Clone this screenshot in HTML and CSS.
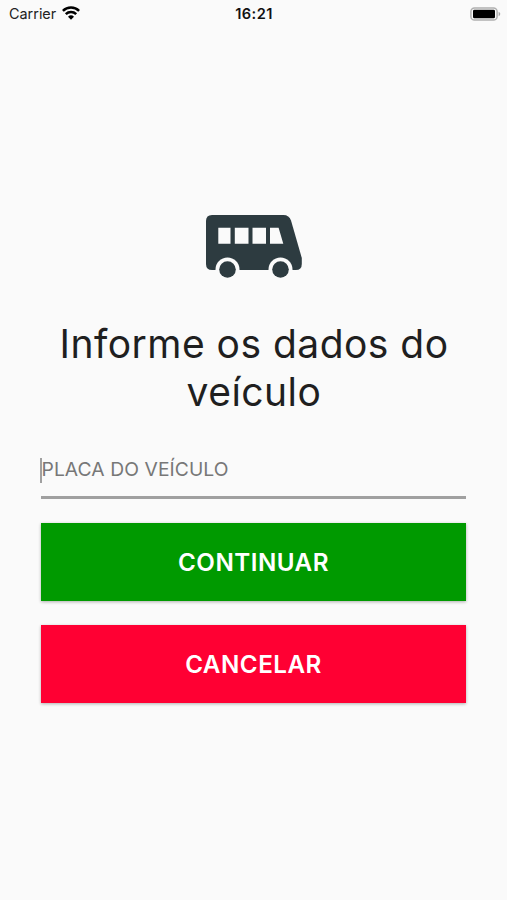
FILE: index.html
```html
<!DOCTYPE html>
<html lang="pt-BR">
<head>
    <meta charset="UTF-8">
    <meta name="viewport" content="width=device-width, initial-scale=1.0">
    <title>Dados do veículo</title>
    <link rel="stylesheet" href="styles.css">
</head>
<body>
    <header class="status-bar">
        <div class="carrier">
            <span>Carrier</span>
            <svg class="wifi" viewBox="0 0 18 14" width="18" height="14">
                <path d="M.9 4.900a11.600 11.600 0 0 1 16.200 0M3.800 8.100a7.400 7.400 0 0 1 10.400 0" fill="none" stroke="#000" stroke-width="2.500"/>
                <path d="M6 10.700a4.300 4.300 0 0 1 6 0L9 13.800z" fill="#000"/>
            </svg>
        </div>
        <div class="clock">16:21</div>
        <div class="power">
            <svg class="battery" viewBox="0 0 31 14" width="31" height="14">
                <rect x="0.9" y="0.9" width="26.2" height="12.2" rx="3.6" fill="#fafafa" stroke="#b0b0b0" stroke-width="1.5"/>
                <rect x="3" y="2.7" width="22" height="8.6" rx="1.4" fill="#000"/>
                <path d="M28.6 4.8c2.2.8 2.2 3.6 0 4.4z" fill="#a8a8a8"/>
            </svg>
        </div>
    </header>

    <main class="content">
        <svg class="bus" viewBox="0 0 98 64" width="98" height="64">
            <path d="M7 0H78.500q5.500 0 7.500 5.500L96.800 43V49q0 6-6 6H7q-6 0-6-6V6q0-6 6-6z" fill="#2d3b40"/>
            <path d="M13.300 12.700h12.200v16H13.300zM29.800 12.700h13.700v16H29.800zM47.500 12.700h13.500v16H47.500zM65 12.700h8.600L78.300 28.700H65z" fill="#fafafa"/>
            <circle cx="22.500" cy="54.500" r="12" fill="#fafafa"/>
            <circle cx="75.500" cy="54.500" r="12" fill="#fafafa"/>
            <circle cx="22.500" cy="54.500" r="8.300" fill="#2d3b40"/>
            <circle cx="75.500" cy="54.500" r="8.300" fill="#2d3b40"/>
        </svg>

        <h1 class="title">Informe os dados do veículo</h1>

        <div class="field">
            <span class="cursor"></span>
            <span class="placeholder">PLACA DO VEÍCULO</span>
        </div>

        <button class="btn btn-continue" type="button">CONTINUAR</button>
        <button class="btn btn-cancel" type="button">CANCELAR</button>
    </main>
</body>
</html>
```

FILE: styles.css
```css
* {
    box-sizing: border-box;
}

body {
    margin: 0;
    min-height: 100vh;
    font-family: 'Inter', sans-serif;
    background: #fafafa;
    color: #1f1f1f;
}

/* Status bar */
.status-bar {
    display: grid;
    grid-template-columns: 1fr auto 1fr;
    align-items: center;
    height: 27px;
    padding: 0 7px 0 9px;
    font-size: 14.4px;
    color: #222;
}

.carrier {
    display: flex;
    align-items: center;
    gap: 6px;
}

.wifi {
    display: block;
    margin-bottom: 2px;
}

.clock {
    padding-right: 1px;
    font-size: 14.6px;
    font-weight: 600;
    letter-spacing: 0.4px;
    color: #111;
}

.power {
    display: flex;
    justify-content: flex-end;
}

.battery {
    display: block;
    margin-right: -1px;
}

.content {
    display: flex;
    flex-direction: column;
    padding: 188px 41px 0;
}

.bus {
    display: block;
    align-self: center;
}

.title {
    margin: 41px 0 0;
    padding-left: 1px;
    font-size: 39px;
    font-weight: 400;
    line-height: 48px;
    letter-spacing: 0.47px;
    text-align: center;
}

/* Text field */
.field {
    position: relative;
    display: flex;
    align-items: center;
    height: 83px;
    padding-top: 28px;
    padding-bottom: 3px;
    border-bottom: 3px solid #a0a0a0;
}

.cursor {
    position: absolute;
    left: -1px;
    top: 42px;
    width: 2px;
    height: 25px;
    background: #a0a0a0;
}

.placeholder {
    padding-left: 0.5px;
    font-size: 19.3px;
    letter-spacing: 0.07px;
    color: #777;
}

/* Buttons */
.btn {
    height: 78px;
    padding: 0;
    border: none;
    font-family: inherit;
    font-size: 24.2px;
    font-weight: 600;
    letter-spacing: 0.5px;
    color: #fff;
    box-shadow: 0 1px 3px rgba(0, 0, 0, 0.3);
}

.btn-continue {
    margin-top: 24px;
    background: #009a00;
}

.btn-cancel {
    margin-top: 24px;
    background: #ff0033;
}
```
